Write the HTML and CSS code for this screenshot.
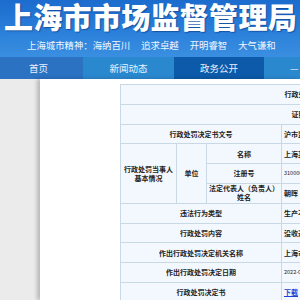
FILE: index.html
```html
<!DOCTYPE html>
<html>
<head>
  <meta charset="utf-8">
  <title>上海市市场监督管理局</title>
  <link rel="stylesheet" href="styles.css">
</head>
<body>
  <div class="header">
    <h1 class="site-title">上海市市场监督管理局</h1>
    <p class="motto">上海城市精神：海纳百川<span>追求卓越</span><span>开明睿智</span><span>大气谦和</span></p>
  </div>
  <div class="nav">
    <a class="nav-home">首页</a>
    <a class="nav-news">新闻动态</a>
    <a class="nav-open">政务公开</a>
    <a class="nav-more">—</a>
  </div>

  <div class="main">
    <div class="side"></div>
    <div class="content">
      <table class="info">
        <colgroup>
          <col class="c-party">
          <col class="c-unit">
          <col class="c-field">
          <col class="c-value">
        </colgroup>
        <tr><td colspan="4" class="caption">行政处罚决定书公示</td></tr>
        <tr><td colspan="4" class="caption">证照信息已公开</td></tr>
        <tr>
          <td colspan="3" class="label">行政处罚决定书文号</td>
          <td class="value">沪市监处〔2022〕号</td>
        </tr>
        <tr>
          <td rowspan="3" class="label">行政处罚当事人<br>基本情况</td>
          <td rowspan="3" class="label">单位</td>
          <td class="label">名称</td>
          <td class="value">上海某某有限公司</td>
        </tr>
        <tr>
          <td class="label">注册号</td>
          <td class="value small">310000000000000</td>
        </tr>
        <tr>
          <td class="label tight">法定代表人（负责人）<br>姓名</td>
          <td class="value">朝晖</td>
        </tr>
        <tr><td colspan="3" class="label">违法行为类型</td><td class="value">生产不合格产品</td></tr>
        <tr><td colspan="3" class="label">行政处罚内容</td><td class="value">没收违法所得</td></tr>
        <tr><td colspan="3" class="label">作出行政处罚决定机关名称</td><td class="value">上海市市场监督管理局</td></tr>
        <tr><td colspan="3" class="label">作出行政处罚决定日期</td><td class="value small">2022-06-01</td></tr>
        <tr><td colspan="3" class="label">行政处罚决定书</td><td class="value"><a href="#">下载</a></td></tr>
      </table>
    </div>
  </div>
</body>
</html>
```

FILE: styles.css
```css
body { margin: 0; width: 300px; height: 300px; overflow: hidden; font-family: "Noto Sans CJK SC", "Noto Sans", sans-serif; background: #ebebeb; }

.header { height: 57px; background: linear-gradient(180deg, #1c6cce 0%, #2a7fd9 55%, #3a8fe2 100%); overflow: hidden; }
.site-title { margin: 0; padding-left: 4px; font-size: 29px; line-height: 32px; font-weight: 900; color: #fff; letter-spacing: 0.3px; white-space: nowrap; text-shadow: 1px 1px 1px rgba(0, 40, 110, 0.5); }
.motto { margin: 7px 0 0 27px; font-size: 9.4px; line-height: 12px; color: #f2f7ff; white-space: nowrap; }
.motto span { margin-left: 11px; }

.nav { display: flex; height: 22px; }
.nav a { display: flex; align-items: center; justify-content: center; color: #eaf3ff; font-size: 9.5px; flex: none; }
.nav-home { width: 83px; background: #2b72c3; padding-right: 6px; box-sizing: border-box; }
.nav-news { width: 91px; background: #2a88cf; }
.nav-open { width: 90px; background: #0c5aa9; }
.nav a.nav-more { width: 40px; background: #2a88cf; padding-left: 26px; box-sizing: border-box; justify-content: flex-start; }

.main { display: flex; height: 221px; }
.side { width: 40px; flex: none; background: #ebebeb; }
.content { flex: 1; background: #fff; box-shadow: -3px 0 4px rgba(0, 0, 0, 0.22); padding: 5px 0 0 80px; overflow: hidden; }

.info { border-collapse: collapse; width: 391px; table-layout: fixed; background: #f3f8fe; color: #222; font-size: 7px; font-weight: bold; }
.info .c-party { width: 56px; }
.info .c-unit { width: 30px; }
.info .c-field { width: 75px; }
.info .c-value { width: 230px; }
.info td { border: 1px solid #c8d8e5; height: 18.8px; padding: 0; text-align: center; line-height: 8.5px; }
.info .value { text-align: left; padding-left: 2px; white-space: nowrap; overflow: hidden; }
.info .small { font-size: 5.5px; font-weight: normal; }
.info .tight { line-height: 9px; }
.info a { color: #1d3fd6; text-decoration: underline; }
```
